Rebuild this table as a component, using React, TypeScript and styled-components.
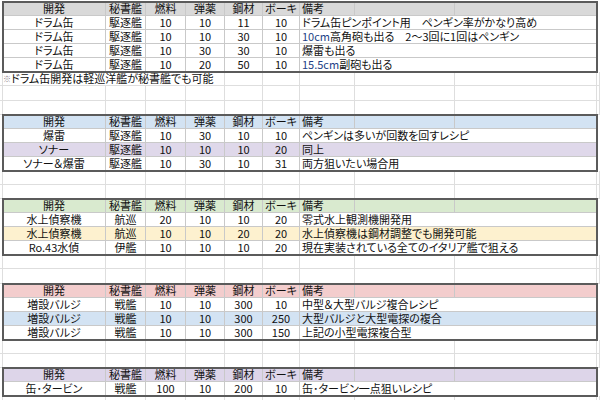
import React from "react";
import styled, { createGlobalStyle } from "styled-components";

const GlobalStyle = createGlobalStyle`
  html, body {
    margin: 0;
    padding: 0;
    background: #fff;
  }
  body {
    font-family: "Noto Sans CJK JP", "Liberation Sans", sans-serif;
    font-size: 11px;
    color: #111;
    font-feature-settings: "palt";
  }
`;

const ROW_H = "14.08px";
const TABLE_COLS = "103px 40px 40px 39px 38px 37px 55px 100px 142px";
const SHEET_COLS = `3px ${TABLE_COLS} 3px`;

type Row = {
  dev: string;
  flag: string;
  fuel: string;
  ammo: string;
  steel: string;
  baux: string;
  note: React.ReactNode;
  bg?: string;
};

type Section = {
  head: string;
  rows: Row[];
  after: number;
  note?: string;
};

const Blue = styled.span`
  color: #233f86;
`;

const sections: Section[] = [
  {
    head: "#d9d9d9",
    rows: [
      { dev: "ドラム缶", flag: "駆逐艦", fuel: "10", ammo: "10", steel: "11", baux: "10", note: "ドラム缶ピンポイント用　ペンギン率がかなり高め" },
      {
        dev: "ドラム缶", flag: "駆逐艦", fuel: "10", ammo: "10", steel: "30", baux: "10",
        note: <><Blue>10cm</Blue>高角砲も出る　2～3回に1回はペンギン</>,
      },
      { dev: "ドラム缶", flag: "駆逐艦", fuel: "10", ammo: "30", steel: "30", baux: "10", note: "爆雷も出る" },
      {
        dev: "ドラム缶", flag: "駆逐艦", fuel: "10", ammo: "20", steel: "50", baux: "10",
        note: <><Blue>15.5cm</Blue>副砲も出る</>,
      },
    ],
    note: "ドラム缶開発は軽巡洋艦が秘書艦でも可能",
    after: 2,
  },
  {
    head: "#d3e3f3",
    rows: [
      { dev: "爆雷", flag: "駆逐艦", fuel: "10", ammo: "30", steel: "10", baux: "10", note: "ペンギンは多いが回数を回すレシピ" },
      { dev: "ソナー", flag: "駆逐艦", fuel: "10", ammo: "10", steel: "10", baux: "20", note: "同上", bg: "#dfd8ea" },
      { dev: "ソナー＆爆雷", flag: "駆逐艦", fuel: "10", ammo: "30", steel: "10", baux: "31", note: "両方狙いたい場合用" },
    ],
    after: 2,
  },
  {
    head: "#d9eacf",
    rows: [
      { dev: "水上偵察機", flag: "航巡", fuel: "20", ammo: "10", steel: "10", baux: "20", note: "零式水上観測機開発用" },
      { dev: "水上偵察機", flag: "航巡", fuel: "10", ammo: "10", steel: "20", baux: "20", note: "水上偵察機は鋼材調整でも開発可能", bg: "#fdf1cf" },
      { dev: "Ro.43水偵", flag: "伊艦", fuel: "10", ammo: "10", steel: "10", baux: "20", note: "現在実装されている全てのイタリア艦で狙える" },
    ],
    after: 2,
  },
  {
    head: "#f3cdcd",
    rows: [
      { dev: "増設バルジ", flag: "戦艦", fuel: "10", ammo: "10", steel: "300", baux: "10", note: "中型＆大型バルジ複合レシピ" },
      { dev: "増設バルジ", flag: "戦艦", fuel: "10", ammo: "10", steel: "300", baux: "250", note: "大型バルジと大型電探の複合", bg: "#d3e3f3" },
      { dev: "増設バルジ", flag: "戦艦", fuel: "10", ammo: "10", steel: "300", baux: "150", note: "上記の小型電探複合型" },
    ],
    after: 2,
  },
  {
    head: "#ddd5e9",
    rows: [
      { dev: "缶･タービン", flag: "戦艦", fuel: "100", ammo: "10", steel: "200", baux: "10", note: "缶･タービン一点狙いレシピ" },
    ],
    after: 1,
  },
];

const HEADINGS = ["開発", "秘書艦", "燃料", "弾薬", "鋼材", "ボーキ"];

export default function App() {
  return (
    <>
      <GlobalStyle />
      <Sheet>
        {sections.map((s, i) => (
          <React.Fragment key={i}>
            <Table>
              <TableRow $bg={s.head}>
                {HEADINGS.map((h) => (
                  <Cell key={h} $align="center">{h}</Cell>
                ))}
                <Cell $align="left">備考</Cell>
                <Cell />
                <Cell />
              </TableRow>
              {s.rows.map((r, j) => (
                <TableRow key={j} $bg={r.bg}>
                  <Cell $align="center">{r.dev}</Cell>
                  <Cell $align="center">{r.flag}</Cell>
                  <Cell $align="center">{r.fuel}</Cell>
                  <Cell $align="center">{r.ammo}</Cell>
                  <Cell $align="center">{r.steel}</Cell>
                  <Cell $align="center">{r.baux}</Cell>
                  <NoteCell>{r.note}</NoteCell>
                </TableRow>
              ))}
            </Table>
            {s.note && (
              <SheetRow>
                <Cell $plain />
                <RemarkCell>
                  <Mark>※</Mark>
                  {s.note}
                </RemarkCell>
                {Array.from({ length: 6 }).map((_, k) => (
                  <Cell key={k} $plain />
                ))}
              </SheetRow>
            )}
            {Array.from({ length: s.after }).map((_, k) => (
              <BlankRow key={k} />
            ))}
          </React.Fragment>
        ))}
      </Sheet>
    </>
  );
}

function BlankRow() {
  return (
    <SheetRow>
      {Array.from({ length: 11 }).map((_, k) => (
        <Cell key={k} $plain />
      ))}
    </SheetRow>
  );
}

const Sheet = styled.div`
  width: 600px;
  height: 400px;
  overflow: hidden;
  padding-top: 2px;
  box-sizing: border-box;
  background: #fff;
`;

const SheetRow = styled.div`
  display: grid;
  grid-template-columns: ${SHEET_COLS};
  height: ${ROW_H};
`;

const Table = styled.div`
  margin: 0 3px;
  width: 594px;
  outline: 2px solid #5b5b5b;
  outline-offset: -1px;
`;

const TableRow = styled.div<{ $bg?: string }>`
  display: grid;
  grid-template-columns: ${TABLE_COLS};
  height: ${ROW_H};
  background: ${(p) => p.$bg || "#fff"};
`;

const Cell = styled.div<{ $align?: "left" | "center"; $plain?: boolean }>`
  box-sizing: border-box;
  height: 100%;
  border-right: 1px solid ${(p) => (p.$plain ? "#dedede" : "#c9c9c9")};
  border-bottom: 1px solid ${(p) => (p.$plain ? "#dedede" : "#c9c9c9")};
  text-align: ${(p) => p.$align || "left"};
  padding: ${(p) => (p.$align === "left" ? "0 2px" : "0")};
  line-height: 13px;
  white-space: nowrap;
`;

const NoteCell = styled(Cell)`
  grid-column: span 3;
  padding: 0 2px;
`;

const RemarkCell = styled(Cell)`
  grid-column: span 4;
  border-color: #dedede;
  padding: 0;
`;

const Mark = styled.span`
  font-size: 8px;
  color: #8c7c86;
  vertical-align: 1px;
`;
